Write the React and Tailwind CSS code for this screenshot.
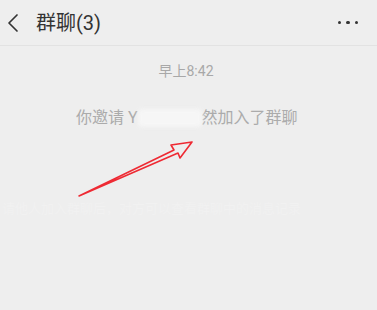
const App = () => {
  return (
    <div
      className="w-[377px] h-[310px] bg-[#eeeeee] relative overflow-hidden"
      style={{ fontFamily: '"Roboto", "Noto Sans CJK SC", sans-serif' }}
    >
      {/* Header */}
      <div className="h-[46px] flex items-center border-b border-[#e2e2e2]">
        <svg className="ml-[7px]" width="12" height="20" viewBox="0 0 12 20">
          <polyline points="10,2 2,10 10,18" fill="none" stroke="#333333" strokeWidth="1.7" strokeLinecap="round" strokeLinejoin="round" />
        </svg>
        <span className="ml-[17px] text-[20px] text-[#333333] leading-none">群聊(3)</span>
        <div className="ml-auto mr-[19px] flex gap-[5px]">
          <span className="w-[3.5px] h-[3.5px] rounded-full bg-[#333333]" />
          <span className="w-[3.5px] h-[3.5px] rounded-full bg-[#333333]" />
          <span className="w-[3.5px] h-[3.5px] rounded-full bg-[#333333]" />
        </div>
      </div>

      {/* Time */}
      <div className="mt-[18px] flex justify-center">
        <span className="text-[14px] text-[#a8a8a8] leading-none mr-[5px]">早上8:42</span>
      </div>

      {/* System message */}
      <div className="mt-[31px] flex pl-[76px] items-center text-[16px] text-[#ababab] leading-none">
        <span>你邀请 Y</span>
        <span className="w-[64px] h-[18px] bg-[#f6f6f6] blur-[2px] rounded-sm" />
        <span>然加入了群聊</span>
      </div>

      {/* Red arrow annotation */}
      <svg className="absolute left-0 top-0" width="377" height="310" viewBox="0 0 377 310">
        <path
          d="M79 196 L178 153 L180 158 L192 142 L171 145 L174 150 L79 196 Z"
          fill="none"
          stroke="#ee2a33"
          strokeWidth="1.6"
          strokeLinejoin="round"
        />
      </svg>

      {/* Faint ghost text */}
      <div className="absolute left-[2px] top-[202px] text-[13px] text-[#f1f1f1] leading-none whitespace-nowrap">
        请他人加入群聊后，对方可以查看群聊中的消息记录
      </div>
    </div>
  );
};

export default App;
